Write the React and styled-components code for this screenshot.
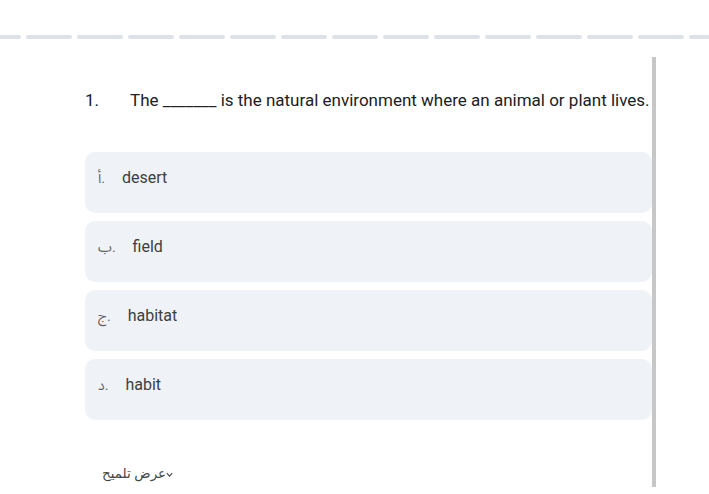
import React from "react";
import styled, { createGlobalStyle } from "styled-components";

const GlobalStyle = createGlobalStyle`
  html, body { margin: 0; padding: 0; background: #ffffff; }
  body { font-family: Roboto, "Noto Sans", "Noto Sans Arabic", "DejaVu Sans", sans-serif; color: #3c4043; }
`;

const Page = styled.div`
  width: 709px;
  height: 494px;
  overflow: hidden;
`;

const DashRow = styled.div`
  display: flex;
  gap: 5px;
  margin: 35px 0 0 -25px;
  height: 4px;
`;

const Dash = styled.span`
  flex: 0 0 46px;
  height: 4px;
  border-radius: 2px;
  background: #dde1e8;
`;

const Sheet = styled.section`
  margin-top: 18px;
  width: 656px;
  height: 430px;
  box-sizing: border-box;
  border-right: 4px solid #c7c7c7;
  padding: 31px 0 0 85px;
`;

const Question = styled.div`
  display: flex;
  font-size: 17px;
  line-height: 24px;
  color: #202124;
`;

const QNum = styled.span`
  flex: 0 0 45px;
`;

const Options = styled.ol`
  list-style: none;
  margin: 40px 0 0;
  padding: 0;
  display: flex;
  flex-direction: column;
  gap: 8px;
`;

const Option = styled.li`
  display: flex;
  align-items: baseline;
  height: 61px;
  box-sizing: border-box;
  padding: 14px 0 0 13px;
  border-radius: 10px;
  background: #eff2f7;
  font-size: 16px;
  line-height: 24px;
  color: #3c4043;
`;

const Label = styled.span`
  font-size: 14px;
  color: #5f6368;
  margin-right: 17px;
`;

const Hint = styled.button`
  display: flex;
  align-items: center;
  gap: 0;
  margin: 43px 0 0 17px;
  padding: 0;
  border: 0;
  background: none;
  font-family: "Noto Sans", "DejaVu Sans", sans-serif;
  font-size: 13.5px;
  line-height: 20px;
  color: #444746;
  cursor: pointer;
`;

const Chevron = () => (
  <svg width="7" height="6" viewBox="0 0 7 6" aria-hidden="true" style={{ marginTop: 4 }}>
    <path d="M0.8 1.2 L3.5 4.2 L6.2 1.2" fill="none" stroke="#444746" strokeWidth="1.1" />
  </svg>
);

const options = [
  ["أ.", "desert"],
  ["ب.", "field"],
  ["ج.", "habitat"],
  ["د.", "habit"],
];

export default function App() {
  return (
    <Page>
      <GlobalStyle />
      <DashRow>
        {Array.from({ length: 15 }).map((_, i) => (
          <Dash key={i} />
        ))}
      </DashRow>
      <Sheet>
        <Question>
          <QNum>1.</QNum>
          <span>The _______ is the natural environment where an animal or plant lives.</span>
        </Question>
        <Options>
          {options.map(([l, t]) => (
            <Option key={t}>
              <Label>{l}</Label>
              <span>{t}</span>
            </Option>
          ))}
        </Options>
        <Hint>
          <span>عرض تلميح</span>
          <Chevron />
        </Hint>
      </Sheet>
    </Page>
  );
}
